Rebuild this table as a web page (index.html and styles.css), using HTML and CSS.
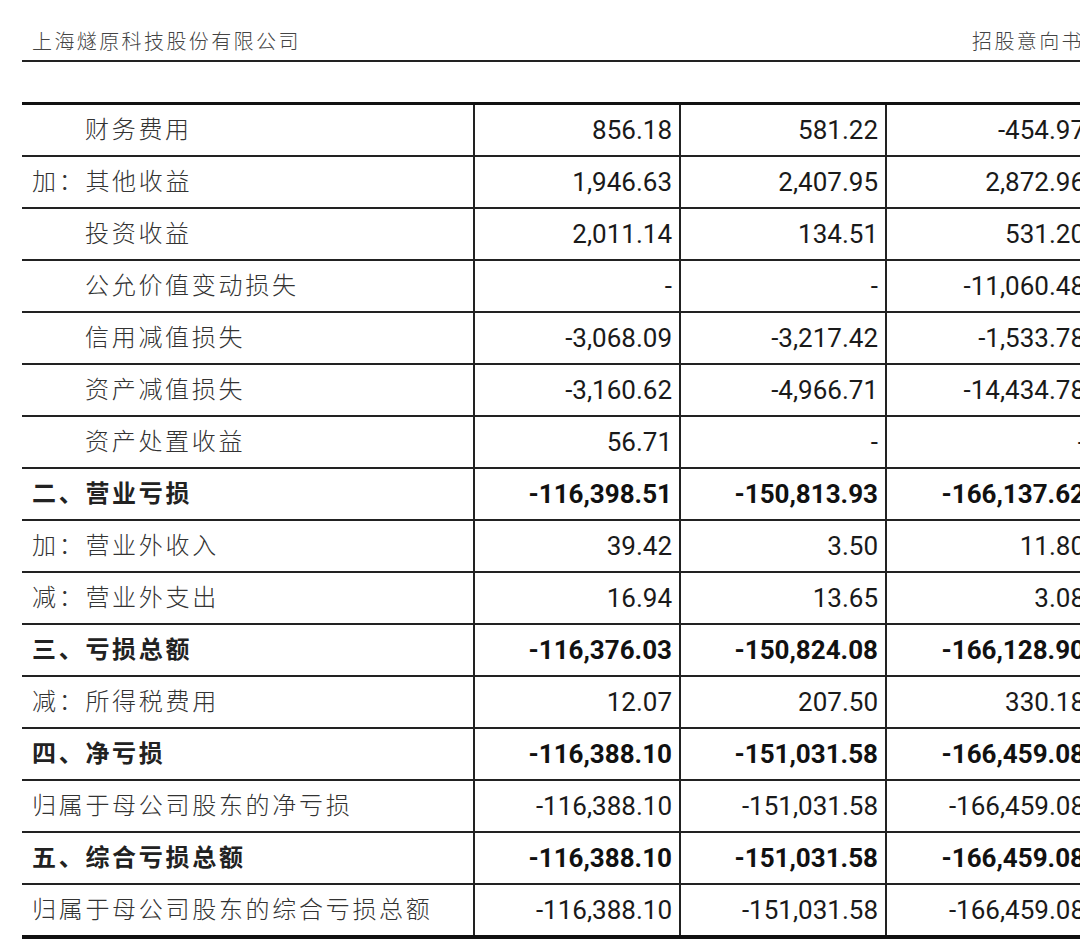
FILE: index.html
```html
<!DOCTYPE html>
<html lang="zh">
<head>
<meta charset="utf-8">
<link rel="stylesheet" href="styles.css">
</head>
<body>
<div class="page">
  <div class="doc-header">
    <span class="company">上海燧原科技股份有限公司</span>
    <span class="doc-type">招股意向书</span>
  </div>
  <table class="fin">
    <colgroup>
      <col class="c-label"><col class="c-num"><col class="c-num"><col class="c-num">
    </colgroup>
    <tbody>
      <tr><td class="label indent">财务费用</td><td>856.18</td><td>581.22</td><td>-454.97</td></tr>
      <tr><td class="label">加：其他收益</td><td>1,946.63</td><td>2,407.95</td><td>2,872.96</td></tr>
      <tr><td class="label indent">投资收益</td><td>2,011.14</td><td>134.51</td><td>531.20</td></tr>
      <tr><td class="label indent">公允价值变动损失</td><td>-</td><td>-</td><td>-11,060.48</td></tr>
      <tr><td class="label indent">信用减值损失</td><td>-3,068.09</td><td>-3,217.42</td><td>-1,533.78</td></tr>
      <tr><td class="label indent">资产减值损失</td><td>-3,160.62</td><td>-4,966.71</td><td>-14,434.78</td></tr>
      <tr><td class="label indent">资产处置收益</td><td>56.71</td><td>-</td><td>-</td></tr>
      <tr class="bold"><td class="label">二、营业亏损</td><td>-116,398.51</td><td>-150,813.93</td><td>-166,137.62</td></tr>
      <tr><td class="label">加：营业外收入</td><td>39.42</td><td>3.50</td><td>11.80</td></tr>
      <tr><td class="label">减：营业外支出</td><td>16.94</td><td>13.65</td><td>3.08</td></tr>
      <tr class="bold"><td class="label">三、亏损总额</td><td>-116,376.03</td><td>-150,824.08</td><td>-166,128.90</td></tr>
      <tr><td class="label">减：所得税费用</td><td>12.07</td><td>207.50</td><td>330.18</td></tr>
      <tr class="bold"><td class="label">四、净亏损</td><td>-116,388.10</td><td>-151,031.58</td><td>-166,459.08</td></tr>
      <tr><td class="label">归属于母公司股东的净亏损</td><td>-116,388.10</td><td>-151,031.58</td><td>-166,459.08</td></tr>
      <tr class="bold"><td class="label">五、综合亏损总额</td><td>-116,388.10</td><td>-151,031.58</td><td>-166,459.08</td></tr>
      <tr class="last"><td class="label">归属于母公司股东的综合亏损总额</td><td>-116,388.10</td><td>-151,031.58</td><td>-166,459.08</td></tr>
    </tbody>
  </table>
</div>
</body>
</html>
```
FILE: styles.css
```css
html, body {
  margin: 0;
  padding: 0;
  background: #fff;
  overflow: hidden;
}
.page {
  width: 1100px;
  padding-left: 22px;
}
.doc-header {
  width: 1070px;
  display: flex;
  justify-content: space-between;
  align-items: flex-end;
  padding: 30px 0 7px 10px;
  box-sizing: border-box;
  height: 62px;
  border-bottom: 2px solid #222;
  font-family: "Noto Sans CJK SC", sans-serif;
  font-weight: 300;
  color: #444;
  font-size: 20px;
  line-height: 24px;
  letter-spacing: 2.4px;
}
.doc-type {
  margin-right: 8px;
}
.fin {
  margin-top: 40px;
  border-collapse: collapse;
  table-layout: fixed;
  width: 1070px;
  border-top: 3px solid #111;
}
.c-label { width: 452px; }
.c-num { width: 206px; }
.fin td {
  height: 50px;
  padding: 0 7px 0 0;
  border-bottom: 2px solid #222;
  border-left: 2px solid #222;
  text-align: right;
  font-family: Roboto, "Liberation Sans", sans-serif;
  font-size: 26px;
  color: #1a1a1a;
  vertical-align: middle;
  white-space: nowrap;
}
.fin td.label {
  height: 46px;
  border-left: none;
  text-align: left;
  padding: 0 0 4px 10px;
  line-height: 24px;
  font-family: "Noto Sans CJK SC", sans-serif;
  font-weight: 300;
  font-size: 24px;
  letter-spacing: 2.7px;
  color: #333;
}
.fin td.indent {
  padding-left: 63px;
}
.fin tr.bold td {
  font-weight: 700;
  color: #111;
}
.fin tr.bold td.label {
  font-weight: 700;
  color: #222;
}
.fin tr.last td {
  border-bottom: 4px solid #111;
}
```
